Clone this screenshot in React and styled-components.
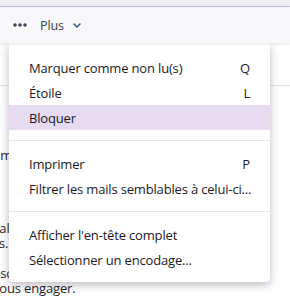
import React from 'react'
import styled, { createGlobalStyle } from 'styled-components'

const GlobalStyle = createGlobalStyle`
    body {
        margin: 0;
        background: #ffffff;
        font-family: "Open Sans", "Noto Sans", sans-serif;
        color: #1b1a26;
    }
`
const Page = styled.div`
    position: relative;
    width: 290px;
    height: 302px;
    overflow: hidden;
    background: #ffffff;
`
const TopStrip = styled.div`
    height: 6px;
    background: #efeef3;
    border-bottom: 1px solid #cbb9d9;
`
const Toolbar = styled.div`
    position: relative;
    z-index: 1;
    height: 36px;
    display: flex;
    align-items: center;
    gap: 13px;
    padding-left: 13px;
    background: #f8f8fa;
    box-shadow: 0 1px 3px rgba(0, 0, 0, 0.12);
`
const ToolButton = styled.div`
    display: flex;
    align-items: center;
    gap: 9px;
    font-size: 12.5px;
    letter-spacing: -0.1px;
    color: #3b3a57;
`
const Content = styled.div`
    margin-left: -7px;
    font-size: 13px;
    line-height: 15px;
    letter-spacing: -0.15px;
    color: #1f1f24;
`
const Divider = styled.div`
    height: 1px;
    margin-top: 42px;
    margin-left: 7px;
    background: #e2e2e2;
`
const Para = styled.p`
    margin: ${p => p.$top}px 0 0 0;
    white-space: nowrap;
`
const Menu = styled.div`
    position: absolute;
    top: 43px;
    left: 9px;
    width: 261px;
    padding: 12px 0 10px;
    background: #ffffff;
    border-radius: 0 0 4px 4px;
    box-shadow: 0 3px 10px rgba(40, 24, 60, 0.3);
    font-size: 13px;
    letter-spacing: -0.17px;
`
const Item = styled.div`
    height: 25px;
    display: flex;
    align-items: center;
    justify-content: space-between;
    padding: 0 20px;
    white-space: nowrap;
    background: ${p => (p.$active ? '#e6dbf0' : 'transparent')};
    color: #1b1a26;
`
const Separator = styled.div`
    height: 1px;
    margin: 10px 0;
    background: #e3e3e3;
`

const Dots = () => (
    <svg width="14" height="4" viewBox="0 0 14 4">
        <circle cx="2" cy="2" r="1.8" fill="#44435c" />
        <circle cx="7" cy="2" r="1.8" fill="#44435c" />
        <circle cx="12" cy="2" r="1.8" fill="#44435c" />
    </svg>
)

const Chevron = () => (
    <svg width="8" height="5" viewBox="0 0 8 5">
        <path d="M1 1l3 3 3-3" fill="none" stroke="#3d4c8a" strokeWidth="1.5" strokeLinecap="round" strokeLinejoin="round" />
    </svg>
)

const groups = [
    [
        { label: 'Marquer comme non lu(s)', key: 'Q' },
        { label: 'Étoile', key: 'L' },
        { label: 'Bloquer', active: true }
    ],
    [
        { label: 'Imprimer', key: 'P' },
        { label: 'Filtrer les mails semblables à celui-ci...' }
    ],
    [
        { label: "Afficher l'en-tête complet" },
        { label: 'Sélectionner un encodage...' }
    ]
]

const App = () => {
  return (
    <Page>
        <GlobalStyle />
        <TopStrip />
        <Toolbar>
            <Dots />
            <ToolButton>
                Plus
                <Chevron />
            </ToolButton>
        </Toolbar>
        <Content>
            <Divider />
            <Para $top={62}>email</Para>
            <Para $top={58}>valable<br />ss.</Para>
            <Para $top={15}>escompter<br />vous engager.</Para>
        </Content>
        <Menu>
            {groups.map((group, i) => (
                <React.Fragment key={i}>
                    {i > 0 && <Separator />}
                    {group.map(item => (
                        <Item key={item.label} $active={item.active}>
                            <span>{item.label}</span>
                            {item.key && <span>{item.key}</span>}
                        </Item>
                    ))}
                </React.Fragment>
            ))}
        </Menu>
    </Page>
  )
}

export default App
